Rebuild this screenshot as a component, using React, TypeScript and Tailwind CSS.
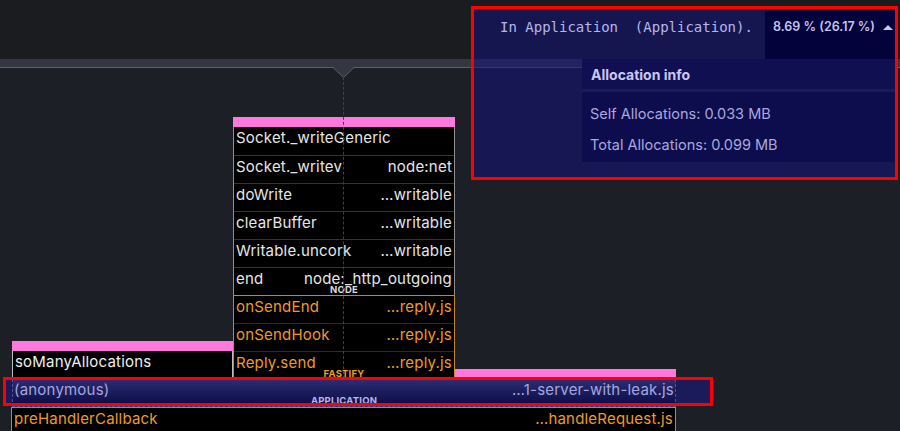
import React from "react";

type Row = { l: string; r?: string };

const nodeRows: Row[] = [
  { l: "Socket._writeGeneric" },
  { l: "Socket._writev", r: "node:net" },
  { l: "doWrite", r: "…writable" },
  { l: "clearBuffer", r: "…writable" },
  { l: "Writable.uncork", r: "…writable" },
  { l: "end", r: "node:_http_outgoing" },
];

const fastifyRows: Row[] = [
  { l: "onSendEnd", r: "…reply.js" },
  { l: "onSendHook", r: "…reply.js" },
  { l: "Reply.send", r: "…reply.js" },
];

function Label({ text, color }: { text: string; color: string }) {
  return (
    <div
      className="absolute bottom-0 left-0 right-0 text-center text-[9.5px] leading-[10px] font-bold"
      style={{ color }}
    >
      {text}
    </div>
  );
}

export default function App() {
  return (
    <div
      className="w-[900px] h-[431px] overflow-hidden relative flex flex-col bg-[#1d1f27]"
      style={{ fontFamily: "Inter, 'Noto Sans', sans-serif" }}
    >
      <div className="h-[59px] bg-[#1b1c1f] shrink-0" />
      <div className="h-[8px] bg-[#343741] shrink-0" />
      <div className="h-px bg-[#5c5f6a] shrink-0" />

      {/* flame canvas */}
      <div className="relative flex-1">
        {/* notch */}
        <svg
          className="absolute left-[333px] top-[-1px]"
          width="21"
          height="11"
          viewBox="0 0 21 11"
        >
          <polygon points="0,0 21,0 10.5,10.5" fill="#343741" />
          <polyline points="0,0.5 10.5,10.5 21,0.5" fill="none" stroke="#5c5f6a" strokeWidth="1" />
        </svg>

        {/* main column */}
        <div className="absolute left-[233px] top-[49px] w-[222px] flex flex-col">
          <div className="h-[10px] bg-[#ff78dc]" />
          <div className="flex flex-col border-x border-[#8f8f8f] bg-black">
            {nodeRows.map((r, i) => (
              <div
                key={r.l}
                className={`relative h-[28px] flex justify-between px-[2px] text-[15px] tracking-[0.2px] leading-[22px] text-[#e6e6e6] ${
                  i > 0 ? "border-t border-[#343434]" : ""
                }`}
              >
                <span>{r.l}</span>
                {r.r && <span>{r.r}</span>}
                {i === nodeRows.length - 1 && <Label text="NODE" color="#dcdcdc" />}
              </div>
            ))}
          </div>
          <div className="flex flex-col border-x border-t border-[#c4862c] bg-black">
            {fastifyRows.map((r, i) => (
              <div
                key={r.l}
                className={`relative flex justify-between px-[2px] text-[15px] tracking-[0.2px] leading-[22px] text-[#ee9a2c] ${
                  i > 0 ? "h-[28px] border-t border-[#332a1c]" : "h-[27px]"
                }`}
              >
                <span>{r.l}</span>
                {r.r && <span>{r.r}</span>}
                {i === fastifyRows.length - 1 && <Label text="FASTIFY" color="#ee9a2c" />}
              </div>
            ))}
          </div>
        </div>

        {/* left column */}
        <div className="absolute left-[12px] top-[273px] w-[221px] flex flex-col">
          <div className="h-[10px] bg-[#ff78dc]" />
          <div className="h-[28px] border-x border-[#bdbdbd] bg-black px-[2px] text-[15px] tracking-[0.2px] leading-[22px] text-[#eeeeee]">
            soManyAllocations
          </div>
        </div>

        {/* right pink */}
        <div className="absolute left-[455px] top-[301px] w-[221px] h-[10px] bg-[#ff78dc]" />

        {/* highlight behind anonymous */}
        <div className="absolute left-[3px] top-[309px] w-[710px] h-[29px] bg-[#1b1b5b]" />

        {/* anonymous row */}
        <div className="absolute left-[12px] top-[311px] w-[664px] h-[28px] border border-dashed border-[#50509a] bg-gradient-to-b from-[#2c2c72] to-[#0a0a44] flex justify-between px-[1px] text-[15px] tracking-[0.2px] leading-[20px] text-[#a6a6de]">
          <span>(anonymous)</span>
          <span>…1-server-with-leak.js</span>
          <Label text="APPLICATION" color="#b6b6f2" />
        </div>

        {/* preHandlerCallback */}
        <div className="absolute left-[11px] top-[339px] w-[665px] h-[28px] border-x border-t border-[#c4862c] bg-black flex justify-between px-[2px] text-[15px] tracking-[0.2px] leading-[22px] text-[#ee9a2c]">
          <span>preHandlerCallback</span>
          <span>…handleRequest.js</span>
        </div>

        {/* dashed cursor line */}
        <div className="absolute left-[343px] top-[9px] h-[302px] w-0 border-l border-dashed border-[#3f424b]" />

        {/* red annotation on row */}
        <div className="absolute left-[3px] top-[309px] w-[710px] h-[29px] border-[3px] border-[#ff0000]" />
      </div>

      {/* tooltip */}
      <div className="absolute left-[471px] top-[6px] w-[427px] h-[174px] border-[3px] border-[#ff0000] bg-[rgba(16,16,128,0.5)] flex flex-col">
        <div className="h-[50px] flex shrink-0">
          <div
            className="flex-1 pl-[26px] pt-[8px] text-[14px] leading-[20px] text-[#b6b6e8] whitespace-pre"
            style={{ fontFamily: "'DejaVu Sans Mono', monospace" }}
          >
            In Application  (Application).
          </div>
          <div className="w-[130px] bg-[#03023a] pl-[8px] pt-[8px] flex items-start gap-[8px]">
            <span className="text-[12.5px] leading-[20px] font-semibold text-[#c2c2f0]">
              8.69 % (26.17 %)
            </span>
            <span className="mt-[8px] w-0 h-0 border-x-[5px] border-x-transparent border-b-[5px] border-b-[#c8c8f0]" />
          </div>
        </div>
        <div className="flex">
          <div className="w-[108px] shrink-0" />
          <div className="flex-1 flex flex-col">
            <div className="h-[30px] bg-[#0f0f52] flex items-center pl-[9px] text-[14px] font-bold text-[#c8c8f0]">
              Allocation info
            </div>
            <div className="h-[3px] bg-[#1a1a5c]" />
            <div className="h-[70px] bg-[#0d0d4d] pl-[8px] pt-[6px] text-[14.5px] leading-[31px] text-[#a8a8de]">
              <div>Self Allocations: 0.033 MB</div>
              <div>Total Allocations: 0.099 MB</div>
            </div>
          </div>
        </div>
      </div>
    </div>
  );
}
